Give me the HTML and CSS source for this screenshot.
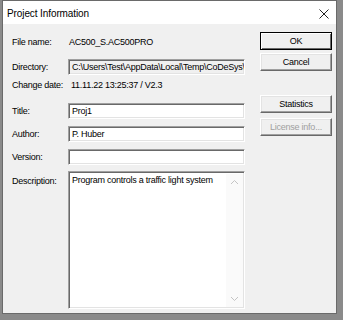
FILE: index.html
```html
<!DOCTYPE html>
<html lang="en">
<head>
    <meta charset="UTF-8">
    <title>Project Information</title>
    <link rel="stylesheet" href="styles.css">
</head>
<body>
    <div class="window">
        <!-- Title bar -->
        <div class="titlebar">
            <span class="title">Project Information</span>
            <svg class="close" width="10" height="10" viewBox="0 0 10 10">
                <path d="M0.5 0.5 L9.5 9.5 M9.5 0.5 L0.5 9.5" stroke="#222" stroke-width="1" fill="none"/>
            </svg>
        </div>

        <div class="content">
            <!-- Form -->
            <div class="form">
                <div class="row row-file">
                    <span class="label">File name:</span>
                    <span class="value">AC500_S.AC500PRO</span>
                </div>
                <div class="row row-dir">
                    <span class="label">Directory:</span>
                    <div class="field readonly">C:\Users\Test\AppData\Local\Temp\CoDeSys\Projects</div>
                </div>
                <div class="row row-date">
                    <span class="label">Change date:</span>
                    <span class="value date">11.11.22 13:25:37 / V2.3</span>
                </div>
                <div class="row row-title">
                    <span class="label">Title:</span>
                    <div class="field">Proj1</div>
                </div>
                <div class="row row-author">
                    <span class="label">Author:</span>
                    <div class="field">P. Huber</div>
                </div>
                <div class="row row-version">
                    <span class="label">Version:</span>
                    <div class="field"></div>
                </div>
                <div class="row row-desc">
                    <span class="label">Description:</span>
                    <div class="field memo">
                        <div class="memo-text">Program controls a traffic light system</div>
                        <div class="scrollbar">
                            <svg width="9" height="6" viewBox="0 0 9 6"><path d="M1 5 L4.5 1.5 L8 5" stroke="#c4c4c4" fill="none"/></svg>
                            <svg width="9" height="6" viewBox="0 0 9 6"><path d="M1 1 L4.5 4.5 L8 1" stroke="#c4c4c4" fill="none"/></svg>
                        </div>
                    </div>
                </div>
            </div>

            <!-- Buttons -->
            <div class="buttons">
                <button class="btn default">OK</button>
                <button class="btn">Cancel</button>
                <button class="btn btn-stats">Statistics</button>
                <button class="btn" disabled>License info...</button>
            </div>
        </div>
    </div>
</body>
</html>
```

FILE: styles.css
```css
body {
    margin: 0;
    background: #8a8a8a;
    font-family: "Liberation Sans", Arial, sans-serif;
    font-size: 9px;
    letter-spacing: -0.25px;
    color: #000;
}
.window {
    box-sizing: border-box;
    width: 335px;
    height: 314px;
    margin-left: 2px;
    border: 1px solid #6a6a6a;
    background: #f0f0f0;
    display: flex;
    flex-direction: column;
}
.titlebar {
    height: 23px;
    background: #fff;
    display: flex;
    align-items: center;
    justify-content: space-between;
    padding: 0 7px 0 4px;
}
.title {
    font-size: 10px;
    letter-spacing: -0.1px;
    padding-top: 2px;
}
.close {
    margin-top: 2px;
}
.content {
    display: flex;
    flex: 1;
}
.form {
    padding-left: 9px;
    display: flex;
    flex-direction: column;
}
.row {
    display: flex;
    align-items: center;
}
.label {
    width: 56px;
    flex-shrink: 0;
    white-space: nowrap;
}
.value {
    padding-left: 1px;
    white-space: nowrap;
}
.date {
    padding-left: 3px;
}
.row-file { height: 14px; margin-top: 11px; }
.row-dir { height: 16px; margin-top: 10px; }
.row-date { height: 14px; margin-top: 3px; }
.row-title { height: 16px; margin-top: 11px; }
.row-author { height: 16px; margin-top: 7px; }
.row-version { height: 16px; margin-top: 7px; }
.row-desc {
    height: 138px;
    margin-top: 6px;
    align-items: flex-start;
}
.row-desc .label {
    padding-top: 5px;
}
.field {
    box-sizing: border-box;
    width: 177px;
    height: 100%;
    background: #fff;
    border: 1px solid;
    border-color: #a0a0a0 #fff #fff #a0a0a0;
    box-shadow: inset 1px 1px 0 #696969, inset -1px -1px 0 #e3e3e3;
    padding: 0 3px;
    white-space: nowrap;
    overflow: hidden;
    display: flex;
    align-items: center;
}
.field.readonly {
    background: #f0f0f0;
}
.memo {
    align-items: stretch;
    padding: 2px 1px 1px 3px;
}
.memo-text {
    flex: 1;
    min-width: 0;
    padding-top: 1px;
}
.scrollbar {
    width: 17px;
    flex-shrink: 0;
    background: #fafafa;
    display: flex;
    flex-direction: column;
    justify-content: space-between;
    align-items: center;
    padding: 5px 0 5px;
}
.buttons {
    display: flex;
    flex-direction: column;
    width: 72px;
    margin-left: 15px;
    padding-top: 8px;
}
.btn {
    box-sizing: border-box;
    height: 18px;
    margin: 0;
    padding: 0;
    font: inherit;
    letter-spacing: inherit;
    color: #000;
    background: #f0f0f0;
    border: 1px solid;
    border-color: #fff #696969 #696969 #fff;
    box-shadow: inset -1px -1px 0 #a0a0a0, inset 1px 1px 0 #e3e3e3;
    margin-bottom: 3px;
}
.btn.default {
    border-color: #000;
    box-shadow: inset 1px 1px 0 #fff, inset -1px -1px 0 #696969;
}
.btn-stats {
    margin-top: 21px;
    margin-bottom: 5px;
}
.btn:disabled {
    color: #a0a0a0;
}
```
